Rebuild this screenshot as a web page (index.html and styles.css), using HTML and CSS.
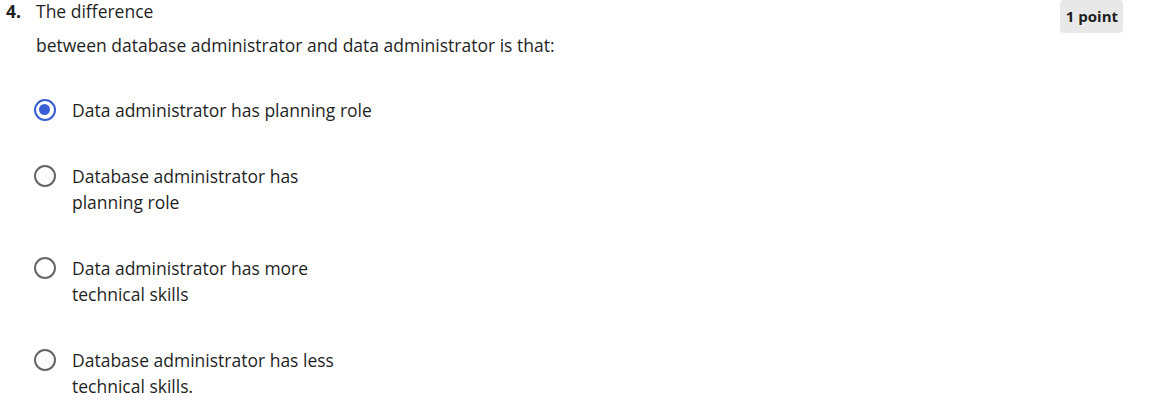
FILE: index.html
```html
<!DOCTYPE html>
<html>
<head>
<meta charset="utf-8">
<link rel="stylesheet" href="styles.css">
</head>
<body>
<div class="question">
  <div class="q-head">
    <div class="q-num">4.</div>
    <div class="q-text">
      <p class="q-line1">The difference</p>
      <p class="q-line2">between database administrator and data administrator is that:</p>
    </div>
    <div class="q-points">1 point</div>
  </div>
  <div class="options">
    <label class="option">
      <span class="radio checked"></span>
      <span class="opt-text">Data administrator has planning role</span>
    </label>
    <label class="option">
      <span class="radio"></span>
      <span class="opt-text">Database administrator has<br>planning role</span>
    </label>
    <label class="option">
      <span class="radio"></span>
      <span class="opt-text">Data administrator has more<br>technical skills</span>
    </label>
    <label class="option">
      <span class="radio"></span>
      <span class="opt-text">Database administrator has less<br>technical skills.</span>
    </label>
  </div>
</div>
</body>
</html>
```

FILE: styles.css
```css
html, body {
  margin: 0;
  padding: 0;
  background: #ffffff;
}
body {
  font-family: "Open Sans", "Liberation Sans", sans-serif;
  color: #1f1f1f;
  font-size: 17.5px;
}
.question {
  padding: 0 38px 0 6px;
}
.q-head {
  display: flex;
  align-items: flex-start;
}
.q-num {
  width: 30px;
  font-weight: 700;
  line-height: 22px;
}
.q-text {
  flex: 1;
}
.q-text p {
  margin: 0;
  line-height: 22px;
}
.q-line2 {
  margin-top: 12px !important;
}
.q-points {
  background: #e8e8e8;
  border-radius: 4px;
  font-weight: 700;
  font-size: 15px;
  line-height: 20px;
  padding: 6px 5px 7px 6px;
  color: #1f1f1f;
}
.options {
  display: flex;
  flex-direction: column;
  gap: 40px;
  padding: 41px 0 0 28px;
}
.option {
  display: flex;
  align-items: flex-start;
  gap: 16px;
}
.radio {
  box-sizing: border-box;
  width: 22px;
  height: 22px;
  margin-top: 2px;
  border-radius: 50%;
  border: 2.5px solid #666666;
  flex-shrink: 0;
  position: relative;
}
.radio.checked {
  border-color: #3b5dd6;
}
.radio.checked::after {
  content: "";
  position: absolute;
  left: 3px;
  top: 3px;
  width: 11px;
  height: 11px;
  border-radius: 50%;
  background: #3b5dd6;
}
.opt-text {
  line-height: 26px;
  color: #1f1f1f;
}
```
